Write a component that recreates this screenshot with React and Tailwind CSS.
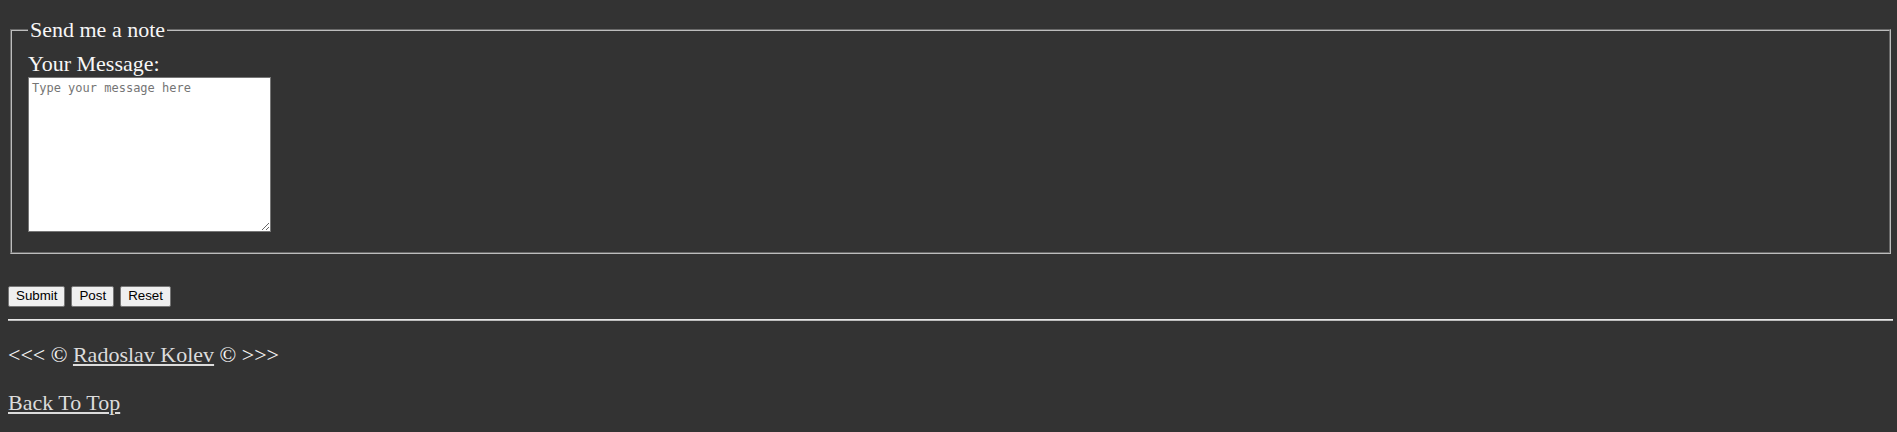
export default function App() {
  return (
    <div className="min-h-screen bg-[#333333] pl-2 pr-[4px] pt-[17px] text-[22px] leading-[1.15] text-[#f7f7f7] font-['Liberation_Serif','Times_New_Roman',serif]">
      <form onSubmit={(e) => e.preventDefault()}>
        {/* note box */}
        <fieldset className="mx-[2px] border-2 border-[#bdbdbd] [border-style:groove] px-[16px] pt-[9px] pb-[20px]">
          <legend className="px-[2px]">Send me a note</legend>
          <label htmlFor="msg" className="block">Your Message:</label>
          <textarea
            id="msg"
            placeholder="Type your message here"
            className="block h-[155px] w-[243px] border border-[#767676] bg-white p-[3px] text-[12px] leading-[1.2] text-black font-['DejaVu_Sans_Mono','Liberation_Mono',monospace] placeholder:text-[#757575]"
          />
        </fieldset>

        <div className="mt-[32px] flex gap-[6px] font-['Liberation_Sans',Arial,sans-serif] text-[13.33px] leading-none text-black">
          <Btn>Submit</Btn>
          <Btn>Post</Btn>
          <Btn>Reset</Btn>
        </div>
      </form>

      <hr className="mt-[12px] h-0 border-t border-b border-t-[#e6e6e6] border-b-[#bcbcbc]" />

      <p className="mt-[21px]">
        &lt;&lt;&lt; © <a href="#" className="text-[#dcdcdc] underline">Radoslav Kolev</a> © &gt;&gt;&gt;
      </p>
      <p className="mt-[23px]">
        <a href="#" className="text-[#dcdcdc] underline">Back To Top</a>
      </p>
    </div>
  );
}

function Btn({ children }) {
  return (
    <button type="button" className="h-[21px] rounded-[2px] border border-[#767676] bg-[#efefef] px-[7px]">
      {children}
    </button>
  );
}
